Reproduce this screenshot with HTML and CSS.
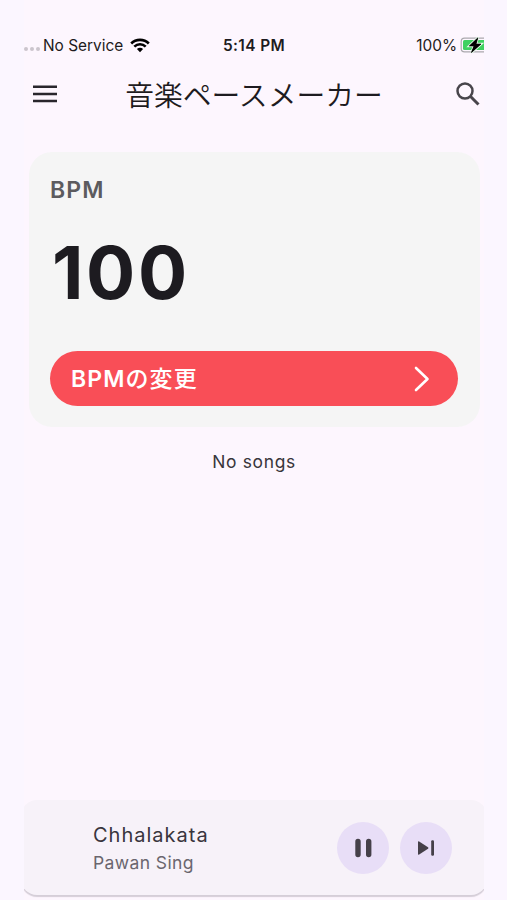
FILE: index.html
```html
<!DOCTYPE html>
<html lang="ja">

<head>
  <meta charset="UTF-8" />
  <meta name="viewport" content="width=device-width, initial-scale=1.0" />
  <title>音楽ペースメーカー</title>
  <link rel="stylesheet" href="styles.css">
</head>

<body>
  <div class="phone">

    <!-- status bar -->
    <div class="status">
      <div class="carrier">
        <span class="dots"><i></i><i></i><i></i></span>
        <span class="service">No Service</span>
        <svg class="wifi" width="20" height="15" viewBox="0 0 20 15" fill="none" stroke="#000" stroke-width="2.6">
          <path d="M1.2 5.5C6 .6 14 .6 18.800 5.500" />
          <path d="M4.300 8.700C7.500 5.500 12.500 5.500 15.700 8.700" />
          <path d="M10 14.200L6.900 11.100C8.700 9.300 11.300 9.300 13.100 11.100Z" fill="#000" stroke="none" />
        </svg>
      </div>
      <span class="time">5:14 PM</span>
      <div class="power">
        <span class="percent">100%</span>
        <svg class="battery" width="24" height="17" viewBox="0 0 24 17">
          <path d="M24 1.200H4.500Q1.200 1.200 1.200 4.500V11.500Q1.200 14.800 4.500 14.800H24" fill="none" stroke="#aaa8ad" stroke-width="1.200" />
          <path d="M24 3H4.500Q3 3 3 4.500V11.500Q3 13 4.500 13H24Z" fill="#3ed160" />
          <path d="M17.900 .8L9.300 9H14L11.400 15.600L21 7H16Z" fill="#000" stroke="#e3f9e7" stroke-width="2.400" paint-order="stroke" />
          <path d="M17.900 .8L9.300 9H14L11.400 15.600L21 7H16Z" stroke="#000" stroke-width=".6" />
        </svg>
      </div>
    </div>

    <header class="appbar">
      <svg class="menu" width="26" height="18" viewBox="0 0 26 18" stroke="#29262c" stroke-width="2.500">
        <path d="M1 1.700H25M1 9H25M1 16H25" />
      </svg>
      <h1>音楽ペースメーカー</h1>
      <svg class="search" width="24" height="24" viewBox="0 0 24 24" fill="none" stroke="#48454b" stroke-width="2.500">
        <circle cx="9" cy="9" r="7.500" />
        <path d="M14.300 14.300L22.500 22.500" stroke-width="3" />
      </svg>
    </header>

    <main>
      <section class="card">
        <h2>BPM</h2>
        <p class="bpm">100</p>
        <button class="change">
          <span>BPM<span class="kana">の変更</span></span>
          <svg width="16" height="26" viewBox="0 0 16 26" fill="none" stroke="#fff" stroke-width="2.600" stroke-linecap="round" stroke-linejoin="round">
            <path d="M2 2L13.500 13L2 24" />
          </svg>
        </button>
      </section>
      <p class="empty">No songs</p>
    </main>

    <!-- mini player -->
    <footer class="player">
      <div class="song">
        <p class="title">Chhalakata</p>
        <p class="artist">Pawan Sing</p>
      </div>
      <button class="round" aria-label="Pause">
        <svg width="18" height="20" viewBox="0 0 18 20" stroke="#454049" stroke-width="5.400" stroke-linecap="round">
          <path d="M4 3.500V16.500M14.700 3.500V16.500" />
        </svg>
      </button>
      <button class="round" aria-label="Next">
        <svg width="18" height="16" viewBox="0 0 18 16" fill="#454049">
          <path d="M1 2Q1 .8 2.200 1.500L11 7.200Q12 8 11 8.800L2.200 14.500Q1 15.200 1 14Z" />
          <rect x="14.200" y=".3" width="2.800" height="15.400" rx="1.200" />
        </svg>
      </button>
    </footer>

  </div>
</body>

</html>
```
FILE: styles.css
```css
* {
  box-sizing: border-box;
}

body {
  margin: 0;
  height: 100vh;
  overflow: hidden;
  background: #fbf6ff;
  font-family: Inter, "Noto Sans CJK JP", sans-serif;
  color: #1d1b20;
}

h1,
h2,
p {
  margin: 0;
}

button {
  border: none;
  font-family: inherit;
}

svg {
  display: block;
  flex: none;
}

.phone {
  display: flex;
  flex-direction: column;
  width: 460px;
  height: 900px;
  margin-left: 24px;
  padding: 34px 0 5px;
  overflow: hidden;
  background: #fdf6fe;
}

.status {
  display: grid;
  grid-template-columns: 1fr auto 1fr;
  align-items: center;
  height: 22px;
  font-size: 15.400px;
}

.carrier,
.power {
  display: flex;
  align-items: center;
}

.dots {
  display: flex;
  gap: 2px;
  width: 19px;
  padding-top: 8px;
}

.dots i {
  width: 4px;
  height: 4px;
  border-radius: 50%;
  background: #cbc5cd;
}

.wifi {
  margin-left: 7px;
}

.time {
  font-weight: 600;
  letter-spacing: .4px;
}

.power {
  justify-content: flex-end;
  gap: 3px;
}

.appbar {
  display: flex;
  align-items: center;
  justify-content: space-between;
  height: 76px;
  padding: 0 4px 0 8px;
}

.appbar h1 {
  padding: 3px 6px 0 0;
  font-size: 28.800px;
  font-weight: 350;
  line-height: 40px;
}

.card {
  height: 275px;
  margin: 20px 4px 0 5px;
  padding: 24px 22px 20px 21px;
  border-radius: 23px;
  background: #f5f5f5;
}

.card h2 {
  font-size: 23px;
  font-weight: 600;
  line-height: 28px;
  letter-spacing: 1.100px;
  color: #5c5b5e;
}

.bpm {
  margin-top: 24px;
  padding-left: 2px;
  font-size: 73px;
  font-weight: 700;
  line-height: 90px;
  letter-spacing: 2.600px;
}

.change {
  display: flex;
  align-items: center;
  justify-content: space-between;
  width: 100%;
  height: 55px;
  margin-top: 33px;
  padding: 0 28px 0 21px;
  border-radius: 28px;
  background: #f94e57;
  color: #fff;
  font-size: 23px;
  font-weight: 600;
  line-height: 34px;
  letter-spacing: 1.100px;
}

.change > span {
  padding-top: 1px;
}

.kana {
  font-weight: 500;
}

.empty {
  margin-top: 24px;
  font-size: 17.400px;
  line-height: 22px;
  letter-spacing: .7px;
  text-align: center;
  color: #39363c;
}

.player {
  display: flex;
  align-items: center;
  gap: 11px;
  height: 95px;
  margin: auto -3px 0;
  padding: 0 35px 0 72px;
  border-radius: 16px;
  background: #f7f2f9;
  box-shadow: 0 2px 1px #d5ced8;
}

.song {
  flex: 1;
  padding-top: 3px;
}

.title {
  font-size: 20px;
  line-height: 28px;
  letter-spacing: 1px;
  color: #39353d;
}

.artist {
  font-size: 17.500px;
  line-height: 28px;
  letter-spacing: .4px;
  color: #6a666e;
}

.round {
  display: flex;
  align-items: center;
  justify-content: center;
  width: 52px;
  height: 52px;
  padding: 0;
  border-radius: 50%;
  background: #e8def7;
}
```
